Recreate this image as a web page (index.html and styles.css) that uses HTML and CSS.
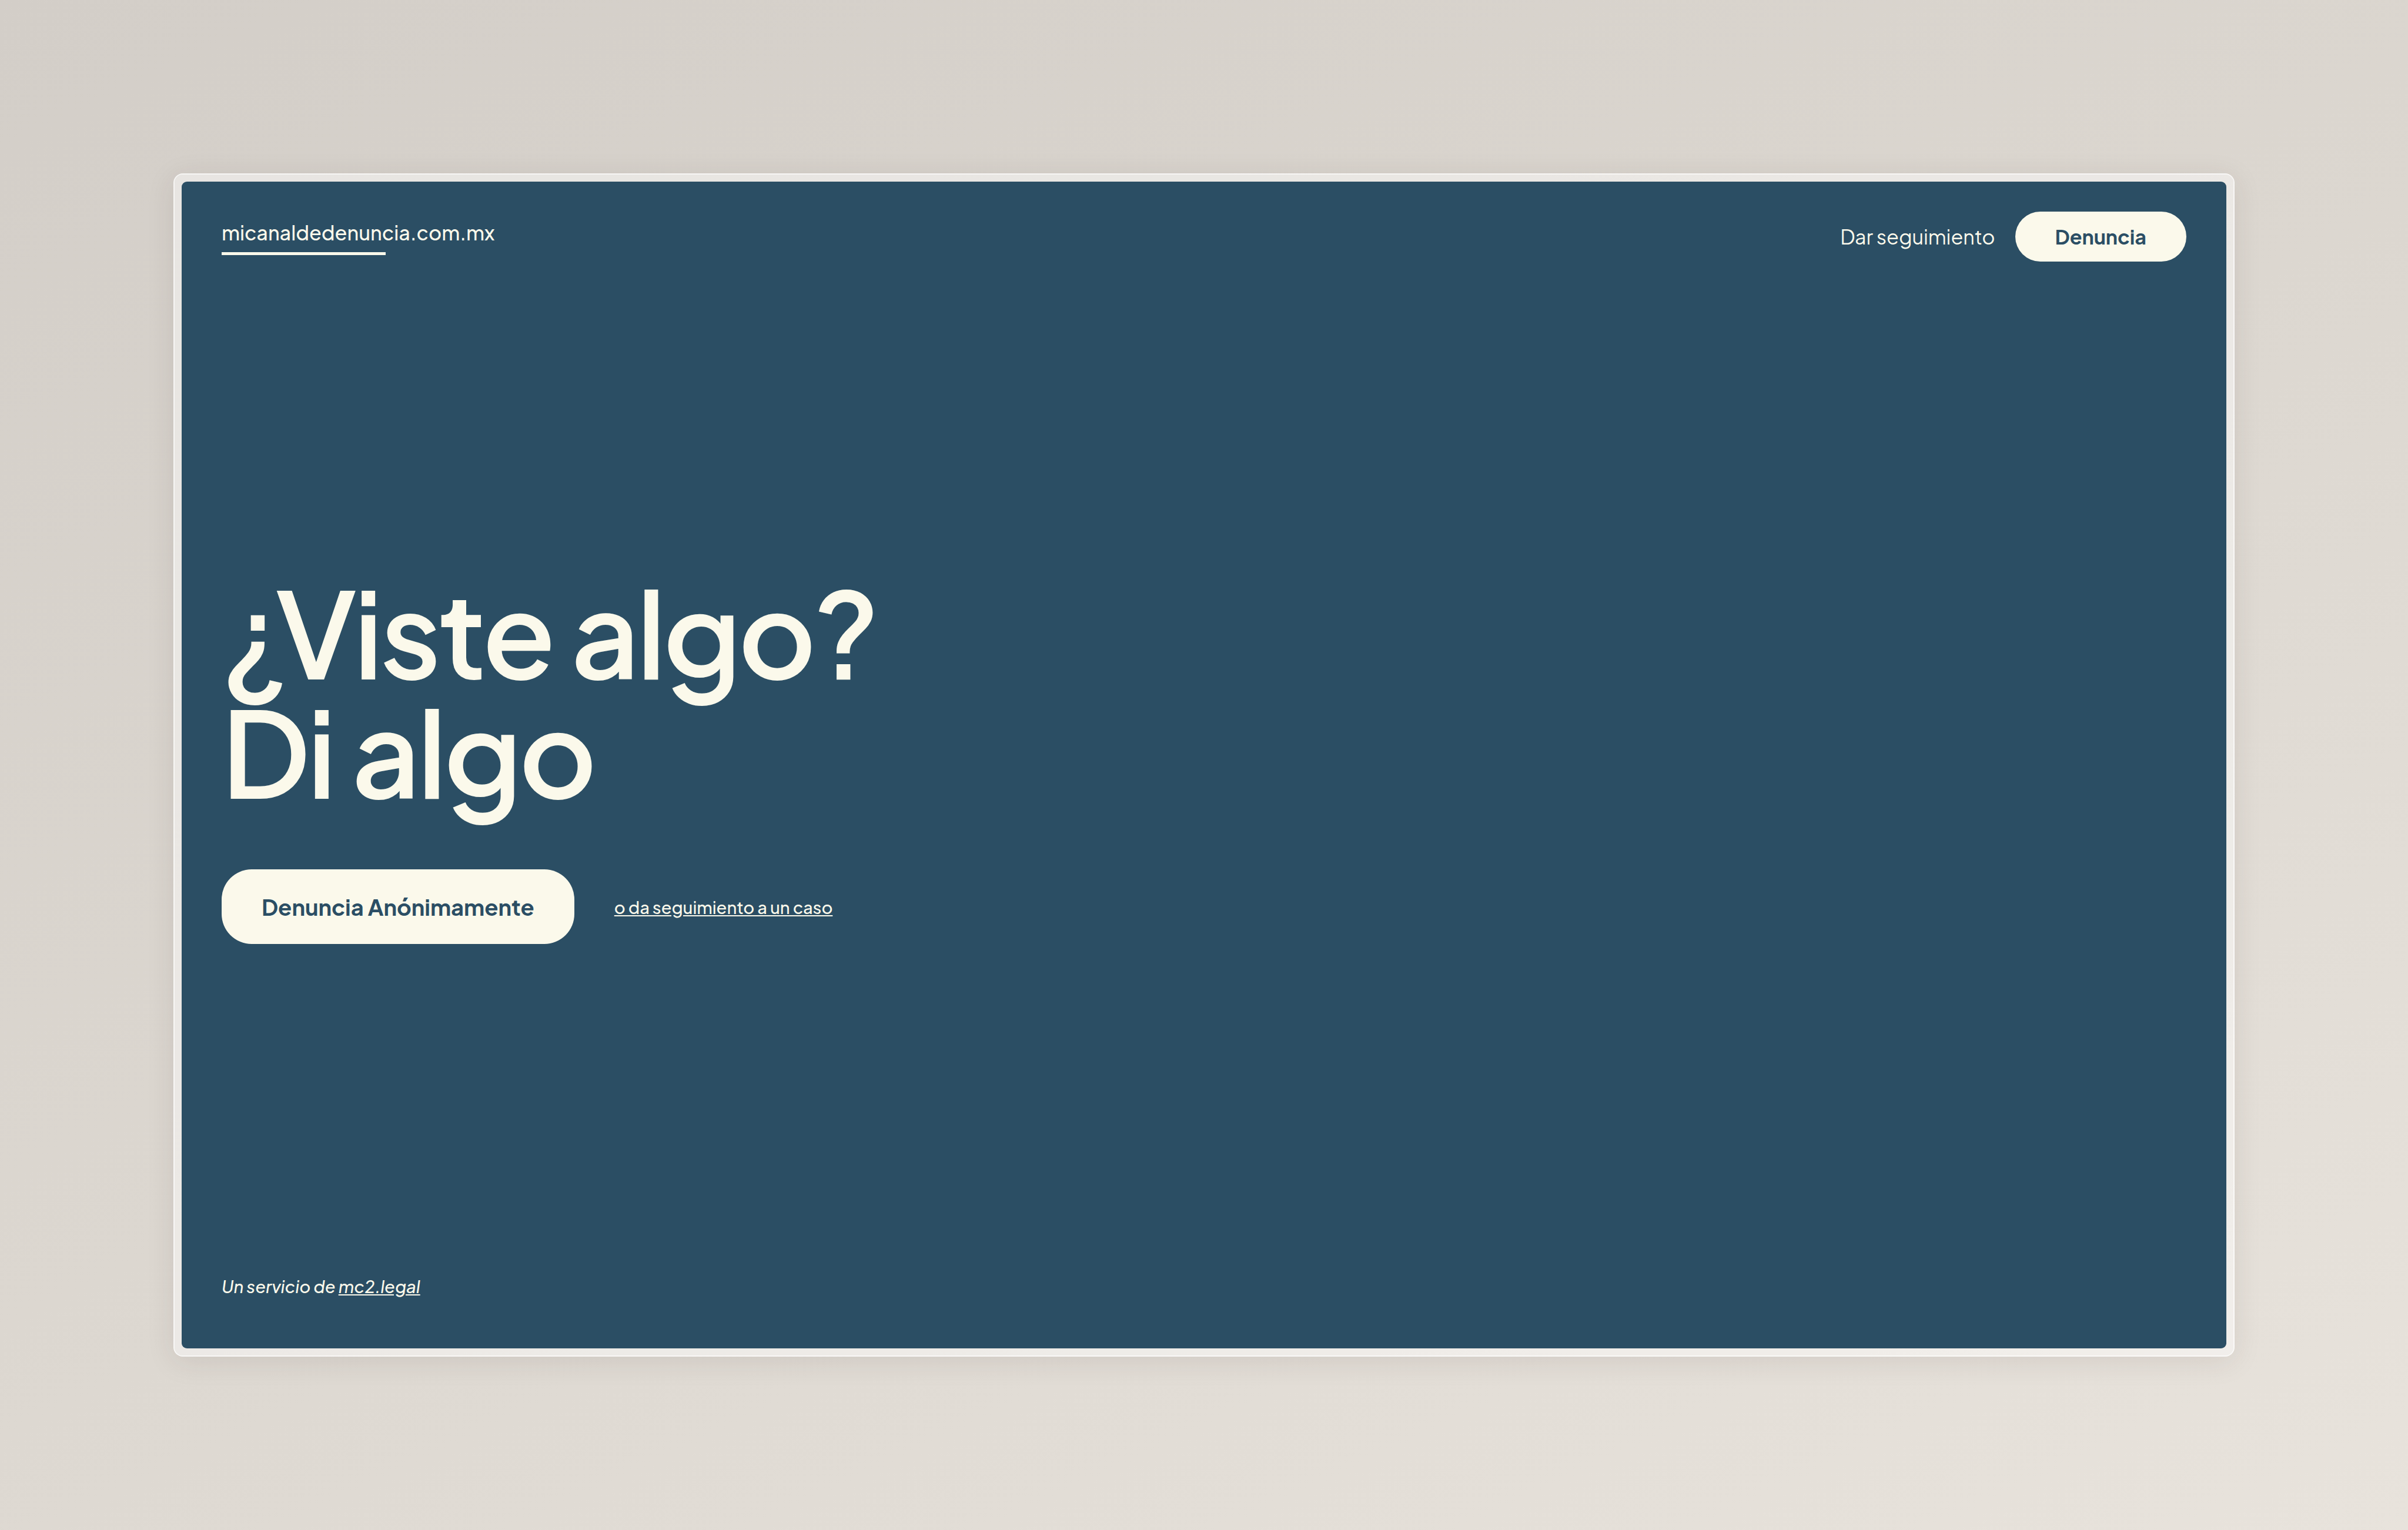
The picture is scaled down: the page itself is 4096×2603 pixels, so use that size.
FILE: index.html
```html
<!DOCTYPE html>
<html lang="es">
<head>
<meta charset="utf-8">
<meta name="viewport" content="width=device-width, initial-scale=1">
<title>micanaldedenuncia.com.mx</title>
<link rel="stylesheet" href="styles.css">
</head>
<body>
<div class="frame">
  <div class="page">
    <header class="header">
      <a class="logo" href="#">micanaldedenuncia.com.mx</a>
      <nav class="nav">
        <a class="nav-link" href="#seguimiento">Dar seguimiento</a>
        <button class="button" type="button">Denuncia</button>
      </nav>
    </header>
    <main class="hero">
      <h1 class="title">¿Viste algo?<br>Di algo</h1>
      <div class="actions">
        <button class="button button-large" type="button">Denuncia Anónimamente</button>
        <a class="case-link" href="#seguimiento">o da seguimiento a un caso</a>
      </div>
    </main>
    <footer class="footer">Un servicio de <a class="footer-link" href="#mc2">mc2.legal</a></footer>
  </div>
</div>
</body>
</html>
```
FILE: styles.css
```css
:root {
  --blue: #2b4e64;
  --cream: #fbf9eb;
  --gutter: 68px;
}

* {
  box-sizing: border-box;
}

body {
  margin: 0;
  min-height: 100vh;
  padding: 295px;
  display: flex;
  background: linear-gradient(155deg, #d3cec8, #dcd7d0 50%, #e8e3dc);
  color: var(--cream);
  font-family: "Plus Jakarta Sans", Inter, sans-serif;
}

.frame {
  flex: 1;
  display: flex;
  padding: 12px;
  border: 2px solid rgba(255, 255, 255, 0.8);
  border-radius: 16px;
  background: rgba(255, 255, 255, 0.45);
  background-clip: padding-box;
  box-shadow: 0 8px 48px rgba(60, 40, 40, 0.1);
}

.page {
  flex: 1;
  display: grid;
  grid-template-rows: auto 1fr auto;
  border-radius: 9px;
  background: var(--blue);
}

a {
  color: inherit;
}

.header {
  display: flex;
  align-items: center;
  justify-content: space-between;
  padding: 51px var(--gutter);
}

.logo {
  font-size: 34px;
  font-weight: 500;
  line-height: 50px;
  text-decoration: none;
}

.logo::after {
  content: "";
  display: block;
  width: 60%;
  height: 5px;
  margin-top: 8px;
  background: var(--cream);
}

.nav {
  display: flex;
  align-items: center;
  gap: 34px;
}

.nav-link {
  font-size: 34px;
  line-height: 50px;
  text-decoration: none;
}

.button {
  height: 85px;
  padding: 0 var(--gutter);
  border: 0;
  border-radius: 51px;
  background: var(--cream);
  color: var(--blue);
  font-family: inherit;
  font-size: 34px;
  font-weight: 700;
}

.button-large {
  height: 127px;
  font-size: 38px;
}

.hero {
  display: flex;
  flex-direction: column;
  justify-content: center;
  gap: 101px;
  padding: 0 var(--gutter);
}

.title {
  margin: 0;
  font-size: 203px;
  font-weight: 600;
  line-height: 203px;
  letter-spacing: -5px;
}

.actions {
  display: flex;
  align-items: center;
  gap: var(--gutter);
}

.case-link {
  font-size: 29px;
  font-weight: 500;
  line-height: 44px;
}

.footer {
  padding: 84px var(--gutter);
  font-size: 29px;
  font-style: italic;
  font-weight: 500;
  line-height: 44px;
}
```
